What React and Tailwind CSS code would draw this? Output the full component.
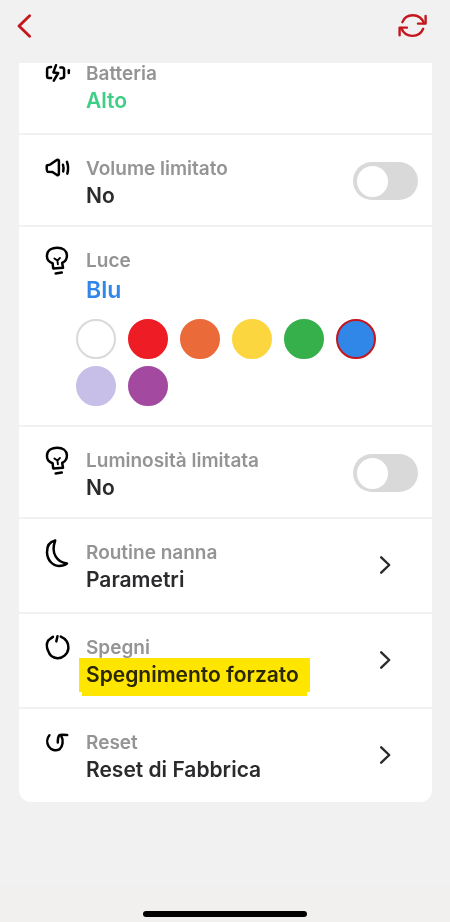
import { useState } from "react";

const ICONS = {
  battery: (
    <>
      <path d="M6.1 7.9 3.8 8.2Q2.2 8.4 2.1 10v7.2q0 1.8 1.6 1.8h2.4" />
      <path d="M11 6.2 8.4 13.4 13.2 14 8.8 21.6" />
      <path d="M15.4 8.6h1.8q1.9.1 1.9 2v6.5q0 2-1.9 2.1l-1.8.2" />
      <path d="M23.8 11.2v2.8" />
    </>
  ),
  volume: (
    <>
      <path d="M2.3 11.2 5.2 10.6 11.8 5.9Q13.7 5.2 13.9 7v12.6q0 2.3-1.9 1.4L7.4 18 2.7 17.8Q1.6 17 1.7 12.4Q1.7 11.4 2.3 11.2Z" />
      <path d="M18 10.8q1 3 .2 6.6" />
      <path d="M21.9 7.8q2.2 5.8.4 11.8" />
    </>
  ),
  bulb: (
    <>
      <path d="M8.2 22.4 7.6 17.2C3.8 16 1.6 13.2 2 9.2 2.4 4.2 7 1.8 12.3 1.8c5.4 0 9.3 2.8 9.6 7.4.2 3.9-1.6 6.3-4.7 7.8l.8 4.8Z" />
      <path
        strokeWidth="1.9"
        d="M9.4 12.4 12.4 14.6 14.9 12M12.4 14.6 12.9 18.4"
      />
      <path d="M10.6 27.4 16.8 26.6" />
    </>
  ),
  moon: (
    <path d="M10.2 2.5C4.4 3.8 1.8 8.6 2 14.4 2.2 22 7.6 27.8 13.8 27.9 17.4 27.9 20 27 22 25.4 12.2 24.6 5.4 15.4 10.2 2.5Z" />
  ),
  power: (
    <>
      <path d="M8 3.8C5.8 5 4.6 6.6 3.1 7.6 1.1 11 1.6 14.6 3.3 18.2 4.6 22.4 7.6 24.9 12.4 25.2 18.2 25.4 22.8 21 23.4 15.2 23.6 9.4 20.4 5.6 15.8 3.6" />
      <path d="M12.5 3.2 11.3 8.4" />
    </>
  ),
  reset: (
    <>
      <path d="M4.4 7.2C2 10 1.4 14.6 3.7 18.4 6 22 10.6 23.4 14.4 21.4 17.8 18.8 18.8 12.6 16.2 7.6" />
      <path d="M22.2 7.1C18.6 6.6 15.4 6.2 14.2 7.4 13 8.8 12.8 11 12.8 14.6" />
    </>
  ),
};

const COLORS = [
  { name: "Bianco", className: "bg-white border-[#d9d9d9]" },
  { name: "Rosso", className: "bg-[#ee1c24] border-[#ee1c24]" },
  { name: "Arancione", className: "bg-[#eb6a3a] border-[#eb6a3a]" },
  { name: "Giallo", className: "bg-[#fcd63f] border-[#fcd63f]" },
  { name: "Verde", className: "bg-[#35b04b] border-[#35b04b]" },
  { name: "Blu", className: "bg-[#3187e8] border-[#3187e8]" },
  { name: "Lilla", className: "bg-[#c7bfe8] border-[#c7bfe8]" },
  { name: "Viola", className: "bg-[#a349a0] border-[#a349a0]" },
];

function RowIcon({ name }) {
  return (
    <svg
      viewBox="0 0 26 28"
      className="h-7 w-[26px] shrink-0 overflow-visible text-black"
      fill="none"
      stroke="currentColor"
      strokeWidth="2.5"
      strokeLinecap="round"
      strokeLinejoin="round"
      aria-hidden="true"
    >
      {ICONS[name]}
    </svg>
  );
}

function RowText({ icon, label, children }) {
  return (
    <span className="flex flex-1 gap-[15px]">
      <RowIcon name={icon} />
      <span className="flex flex-col items-start">
        <span className="text-[19px] leading-[30px] font-semibold text-[#949494]">
          {label}
        </span>
        {children}
      </span>
    </span>
  );
}

function Value({ children }) {
  return (
    <span className="block text-[21px] leading-6 font-semibold text-[#2b2b2d]">
      {children}
    </span>
  );
}

function ToggleRow({ icon, label }) {
  const [on, setOn] = useState(false);

  return (
    <li className="pt-[19px] pb-[17px]">
      <label className="flex items-center pr-3.5 pl-[26px]">
        <RowText icon={icon} label={label}>
          <Value>{on ? "Sì" : "No"}</Value>
        </RowText>
        <input
          type="checkbox"
          role="switch"
          checked={on}
          onChange={(e) => setOn(e.target.checked)}
          className="flex h-[38px] w-[65px] shrink-0 appearance-none items-center rounded-full bg-[#d9d9d9] px-1 before:size-[31px] before:rounded-full before:bg-white checked:justify-end checked:bg-[#3fce85]"
        />
      </label>
    </li>
  );
}

function LinkRow({ icon, label, value, highlighted }) {
  return (
    <li>
      <button
        type="button"
        className="flex w-full items-center pt-[19px] pr-[41px] pb-5 pl-[26px] text-left"
      >
        <RowText icon={icon} label={label}>
          {highlighted ? (
            <span className="relative">
              <Value>{value}</Value>
              <span className="absolute -top-[5px] -right-[11px] -left-[7px] h-[34px] bg-[#ffe600] mix-blend-multiply" />
              <span className="absolute top-[29px] -right-2 -left-1 h-1 bg-[#ffe600] mix-blend-multiply" />
            </span>
          ) : (
            <Value>{value}</Value>
          )}
        </RowText>
        <svg
          viewBox="0 0 12 20"
          className="h-5 w-3 shrink-0"
          fill="none"
          stroke="#2b2b2d"
          strokeWidth="2.4"
          strokeLinecap="round"
          strokeLinejoin="round"
          aria-hidden="true"
        >
          <path d="M2.2 2.3 10.2 10 2.2 17.7" />
        </svg>
      </button>
    </li>
  );
}

export default function App() {
  const [color, setColor] = useState("Blu");

  return (
    <div className="flex min-h-screen flex-col bg-[#f1f1f1] font-['Inter',sans-serif]">
      <header className="flex h-[63px] items-start justify-between pt-3.5 pr-[22px] pl-4">
        <button type="button" aria-label="Indietro">
          <svg
            viewBox="0 0 16 24"
            className="h-6 w-4"
            fill="none"
            stroke="#c4161c"
            strokeWidth="2.8"
            strokeLinecap="round"
            strokeLinejoin="round"
          >
            <path d="M13.6 1.7 3 12 13.6 22.3" />
          </svg>
        </button>
        <button type="button" aria-label="Aggiorna">
          <svg
            viewBox="0 0 30 24"
            className="h-6 w-[30px]"
            fill="none"
            stroke="#c4161c"
            strokeWidth="2.4"
            strokeLinecap="round"
            strokeLinejoin="round"
          >
            <path d="M4.4 8.2C6 3.8 10 1.2 14.8 1.2 20 1.2 24 4 26 9.2" />
            <path d="M27.6 2v7.6h-7.6" />
            <path d="M25.2 14.8C23.2 19.4 19.2 21.9 14.6 21.9 9.4 21.9 5.2 19 3.2 14" />
            <path d="M1.6 21.2V13.6H9" />
          </svg>
        </button>
      </header>

      <main className="mr-[18px] ml-[19px]">
        <ul className="flex flex-col divide-y-2 divide-[#f1f1f1] rounded-b-xl bg-white">
          <li className="flex pr-3.5 pb-5 pl-[26px]">
            <div className="-mt-1 flex">
              <RowText icon="battery" label="Batteria">
                <span className="text-[21px] leading-6 font-semibold text-[#3fce85]">
                  Alto
                </span>
              </RowText>
            </div>
          </li>
          <ToggleRow icon="volume" label="Volume limitato" />
          <li className="pt-[19px] pb-[19px]">
            <div className="flex pr-3.5 pl-[26px]">
              <RowText icon="bulb" label="Luce">
                <span className="text-[23px] leading-7 font-semibold text-[#3187e8]">
                  {color}
                </span>
              </RowText>
            </div>
            <div className="mt-[15px] flex flex-wrap gap-x-3 gap-y-[7px] pr-3.5 pl-[57px]">
              {COLORS.map((c) => (
                <button
                  key={c.name}
                  type="button"
                  aria-label={c.name}
                  aria-pressed={c.name === color}
                  onClick={() => setColor(c.name)}
                  className={`size-10 rounded-full border-2 ${c.className} aria-pressed:border-[#c4161c]`}
                />
              ))}
            </div>
          </li>
          <ToggleRow icon="bulb" label="Luminosità limitata" />
          <LinkRow icon="moon" label="Routine nanna" value="Parametri" />
          <LinkRow
            icon="power"
            label="Spegni"
            value="Spegnimento forzato"
            highlighted
          />
          <LinkRow icon="reset" label="Reset" value="Reset di Fabbrica" />
        </ul>
      </main>

      <footer className="mt-auto flex h-9 items-end justify-center bg-[#f1f0ee] pb-[5px]">
        <div className="h-1.5 w-[164px] rounded-full bg-black" />
      </footer>
    </div>
  );
}
